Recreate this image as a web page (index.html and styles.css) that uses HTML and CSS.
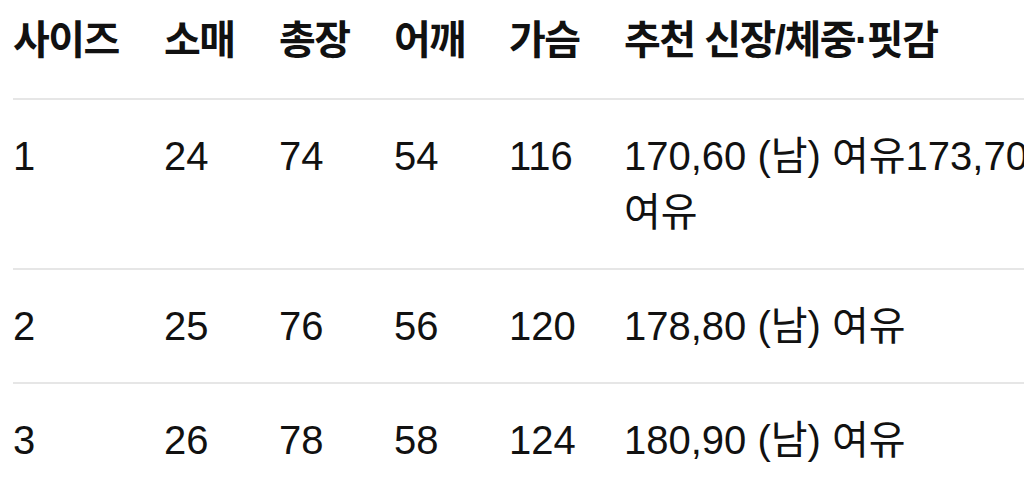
FILE: index.html
```html
<!DOCTYPE html>
<html lang="ko">
<head>
<meta charset="utf-8">
<link rel="stylesheet" href="styles.css">
</head>
<body>
<table class="size-table">
  <colgroup>
    <col class="c-size"><col class="c-num"><col class="c-num"><col class="c-num"><col class="c-num"><col class="c-rec">
  </colgroup>
  <thead>
    <tr><th>사이즈</th><th>소매</th><th>총장</th><th>어깨</th><th>가슴</th><th>추천 신장/체중·핏감</th></tr>
  </thead>
  <tbody>
    <tr><td>1</td><td>24</td><td>74</td><td>54</td><td>116</td><td>170,60 (남) 여유173,70 여유</td></tr>
    <tr><td>2</td><td>25</td><td>76</td><td>56</td><td>120</td><td>178,80 (남) 여유</td></tr>
    <tr><td>3</td><td>26</td><td>78</td><td>58</td><td>124</td><td>180,90 (남) 여유</td></tr>
  </tbody>
</table>
</body>
</html>
```
FILE: styles.css
```css
html, body {
  margin: 0;
  padding: 0;
  background: #ffffff;
}
body {
  padding-left: 13px;
  font-family: "Liberation Sans", "Noto Sans CJK KR", sans-serif;
  font-size: 40px;
  color: #111111;
  overflow: hidden;
}
.size-table {
  border-collapse: collapse;
  table-layout: fixed;
  width: 1040px;
}
.c-size { width: 151px; }
.c-num { width: 115px; }
.c-rec { width: auto; }
.size-table th,
.size-table td {
  text-align: left;
  vertical-align: top;
  padding: 28px 0;
  line-height: 56px;
  border-bottom: 2px solid #e6e6e6;
}
.size-table th {
  font-weight: 700;
  padding-top: 12px;
  padding-bottom: 30px;
  letter-spacing: -1.5px;
}
.size-table tbody tr:last-child td {
  border-bottom: none;
}
```
